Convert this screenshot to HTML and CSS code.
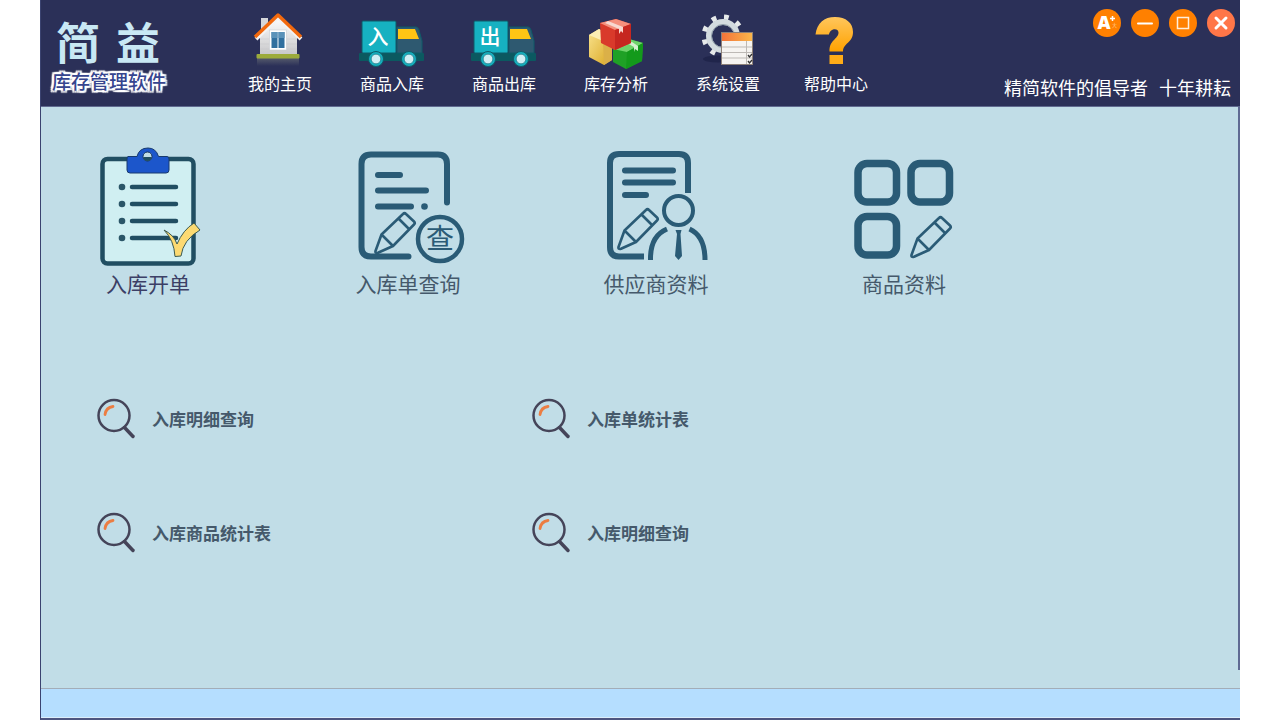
FILE: index.html
```html
<!DOCTYPE html>
<html lang="zh-CN">
<head>
    <meta charset="UTF-8">
    <title>简益库存管理软件</title>
    <link rel="stylesheet" href="styles.css">
</head>
<body>
    <!-- 公用图形 -->
    <svg class="defs" width="0" height="0" aria-hidden="true">
        <defs>
            <linearGradient id="gold" x1="0" y1="0" x2="0" y2="1">
                <stop offset="0" stop-color="#ffc65c"/>
                <stop offset="1" stop-color="#ffa200"/>
            </linearGradient>
            <linearGradient id="wall" x1="0" y1="0" x2="0" y2="1">
                <stop offset="0" stop-color="#ffffff"/>
                <stop offset="1" stop-color="#c9c9cb"/>
            </linearGradient>
            <linearGradient id="shade" x1="0" y1="0" x2="0" y2="1">
                <stop offset="0" stop-color="#555a6c"/>
                <stop offset="1" stop-color="#2b3058"/>
            </linearGradient>
            <linearGradient id="yellow" x1="0" y1="0" x2="1" y2="1">
                <stop offset="0" stop-color="#f9e38e"/>
                <stop offset="1" stop-color="#d9a520"/>
            </linearGradient>
            <linearGradient id="head" x1="0" y1="0" x2="1" y2="0">
                <stop offset="0" stop-color="#f2733a"/>
                <stop offset="1" stop-color="#fbb64a"/>
            </linearGradient>
        </defs>
        <symbol id="truck" viewBox="0 0 72 56">
            <rect x="3" y="41" width="65" height="8" rx="1" fill="#0b5960"/>
            <rect x="6" y="9" width="34" height="32" rx="1" fill="#16b1c1" stroke="#0f5b68"/>
            <path d="M41 41V15H60Q62 15 63 18L66 29V41Z" fill="#2e5970" stroke="#0f5b68"/>
            <path d="M42 17H59L63 27H42Z" fill="#fec514"/>
            <circle cx="20" cy="47" r="7.5" fill="#17aebd" stroke="#0f5b68"/>
            <circle cx="20" cy="47" r="4.8" fill="#d2eff5" stroke="#0f6b78" stroke-width="0.6"/>
            <circle cx="53" cy="47" r="7.5" fill="#17aebd" stroke="#0f5b68"/>
            <circle cx="53" cy="47" r="4.8" fill="#d2eff5" stroke="#0f6b78" stroke-width="0.6"/>
        </symbol>
        <symbol id="pencil" viewBox="0 0 44 44">
            <path d="M2.5 40L8.5 23.5L30 3Q31.5 1.5 33 3L41 10.5Q42.5 12 41 13.5L20 35L5 41.8Q2 42.5 2.5 40Z M8.5 23.5L20 35 M25.5 7.5L36 18" fill="none" stroke="#2a5b76" stroke-width="2.6" stroke-linejoin="round"/>
        </symbol>
        <symbol id="search" viewBox="0 0 40 42">
            <circle cx="18" cy="17.5" r="15.5" fill="none" stroke="#454459" stroke-width="2.5"/>
            <path d="M28.5 29.5L37 38.5" stroke="#454459" stroke-width="3.5" stroke-linecap="round"/>
            <path d="M9 16.5Q10 9.5 17 8.5" fill="none" stroke="#ec7d42" stroke-width="2.8" stroke-linecap="round"/>
        </symbol>
    </svg>

    <div class="window">
        <header class="header">
            <div class="logo">
                <div class="logo-name"><span>简</span><span>益</span></div>
                <div class="logo-sub">库存管理软件</div>
            </div>

            <nav class="nav">
                <a class="nav-item" href="#home">
                    <svg class="nav-icon" viewBox="0 0 72 56">
                        <path d="M17 6H24V20H17Z" fill="#d5d6da"/>
                        <path d="M16 21L34 4L53 21V42H16Z" fill="url(#wall)"/>
                        <path d="M16 32H53M16 37H53M16 27H53" stroke="#c4c4c8" stroke-width="0.5"/>
                        <path d="M12 27L34 5L57 27" fill="none" stroke="#f3f3f3" stroke-width="4"/>
                        <path d="M11 25L34 3L57 25" fill="none" stroke="#f2690d" stroke-width="3.5" stroke-linejoin="round"/>
                        <rect x="25.5" y="18" width="17" height="20" fill="#fff" stroke="#c9ccd0" stroke-width="0.6"/>
                        <path d="M27.5 20H33.5V36H27.5ZM34.5 20H40.5V36H34.5Z" fill="#31709f"/>
                        <path d="M27.5 20H33.5V26H27.5ZM34.5 20H40.5V26H34.5Z" fill="#5a92b9"/>
                        <rect x="13" y="46" width="42" height="8" fill="url(#shade)"/>
                        <rect x="12.5" y="42" width="43" height="4.5" rx="1" fill="#9cab3b"/>
                    </svg>
                    <span>我的主页</span>
                </a>
                <a class="nav-item" href="#in">
                    <svg class="nav-icon" viewBox="0 0 72 56">
                        <use href="#truck" width="72" height="56"/>
                        <text class="truck-text" x="22" y="32">入</text>
                    </svg>
                    <span>商品入库</span>
                </a>
                <a class="nav-item" href="#out">
                    <svg class="nav-icon" viewBox="0 0 72 56">
                        <use href="#truck" width="72" height="56"/>
                        <text class="truck-text" x="22" y="32">出</text>
                    </svg>
                    <span>商品出库</span>
                </a>
                <a class="nav-item" href="#stat">
                    <svg class="nav-icon" viewBox="0 0 72 56">
                        <path d="M9 23L19 17L32 24V48L24 53L9 45Z" fill="url(#yellow)"/>
                        <path d="M9 23L19 17L32 24L23 29Z" fill="#fbeeb4"/>
                        <path d="M23 29L32 24V48L24 53Z" fill="#dbb048"/>
                        <path d="M33 37L49 27L63 31L62 49L46 57L33 50Z" fill="#1fa126"/>
                        <path d="M33 37L49 27L63 31L47 40Z" fill="#6fd36a"/>
                        <path d="M47 40L63 31L62 49L46 57Z" fill="#139a1b"/>
                        <path d="M52 30L58 34V39L55 37L54 40V35L47 31Z" fill="#d5f0d0"/>
                        <path d="M20 11L36 7L51 12V31L35 38L21 31Z" fill="#d93a2b"/>
                        <path d="M20 11L36 7L51 12L35 18Z" fill="#f5907d"/>
                        <path d="M35 18L51 12V31L35 38Z" fill="#c62720"/>
                        <path d="M28 9L43 15V21L41 19L39 22V17L25 11Z" fill="#f8d8d0"/>
                    </svg>
                    <span>库存分析</span>
                </a>
                <a class="nav-item" href="#setting">
                    <svg class="nav-icon" viewBox="0 0 72 56">
                        <ellipse cx="26" cy="47" rx="15" ry="3.5" fill="#20254b"/>
                        <circle cx="31" cy="24" r="19" fill="none" stroke="#e6e9ea" stroke-width="5" stroke-dasharray="4.8 8.463" transform="rotate(-87 31 24)"/>
                        <circle cx="31" cy="24" r="14" fill="none" stroke="#d3dbdf" stroke-width="6"/>
                        <circle cx="31" cy="24" r="11.5" fill="none" stroke="#8d9ba6"/>
                        <rect x="29.5" y="20.5" width="31" height="32" fill="#f6f4f1" stroke="#8c8078"/>
                        <rect x="30" y="21" width="30" height="8" fill="url(#head)"/>
                        <path d="M30 35H60M30 40.5H60M30 46H60M54.5 29V52" stroke="#bdb9b5"/>
                        <path d="M56 43L57.5 45L60 42M56 49L57.5 51L60 48" fill="none" stroke="#333" stroke-width="1.3"/>
                    </svg>
                    <span>系统设置</span>
                </a>
                <a class="nav-item" href="#help">
                    <svg class="nav-icon" viewBox="0 0 72 56">
                        <path d="M15.5 22.5C17 11 24 5 35 5C46 5 53 11 53 20C53 31 43 31 43 39.5H29.5C29 28 38.5 27 38.5 20.5C38.5 15.5 30 16 29 22.5Z" fill="url(#gold)"/>
                        <rect x="29.5" y="43" width="13.5" height="9" fill="#ffac17"/>
                    </svg>
                    <span>帮助中心</span>
                </a>
            </nav>

            <div class="header-right">
                <div class="controls">
                    <button class="ctrl" aria-label="字体放大">
                        <svg viewBox="0 0 28 28">
                            <text class="ctrl-a" x="11" y="20">A</text>
                            <path d="M17 9.5H22M19.5 7V12" stroke="#fff" stroke-width="1.5"/>
                            <text class="ctrl-small" x="21" y="18">大</text>
                        </svg>
                    </button>
                    <button class="ctrl" aria-label="最小化">
                        <svg viewBox="0 0 28 28"><path d="M7 14.5H21" stroke="#fff" stroke-width="2" stroke-linecap="round"/></svg>
                    </button>
                    <button class="ctrl" aria-label="最大化">
                        <svg viewBox="0 0 28 28"><rect x="8.5" y="8.5" width="11" height="11" fill="none" stroke="#ffeeda" stroke-width="1.5"/></svg>
                    </button>
                    <button class="ctrl ctrl-close" aria-label="关闭">
                        <svg viewBox="0 0 28 28"><path d="M9 9L19 19M19 9L9 19" stroke="#fff" stroke-width="3" stroke-linecap="round"/></svg>
                    </button>
                </div>
                <div class="slogan"><span>精简软件的倡导者</span><span>十年耕耘</span></div>
            </div>
        </header>

        <main class="content">
            <div class="cards">
                <a class="card card-first" href="#order">
                    <svg class="card-icon" viewBox="0 0 108 120">
                        <rect x="8.5" y="11" width="91" height="104.5" rx="5" fill="#d0eff2" stroke="#214e62" stroke-width="4.5"/>
                        <path d="M34 8.5H43Q45 0 54 0Q62 0 64.5 8.5H73Q75 8.5 75 11V22Q75 25 72 25H36Q33 25 33 22V11Q33 8.5 34 8.5Z" fill="#1c56cb" stroke="#183a6e"/>
                        <circle cx="53.5" cy="8.5" r="4.5" fill="#c2dde6" stroke="#17345c"/>
                        <path d="M49.5 9A4 4 0 0 0 57.5 9Z" fill="#214e62"/>
                        <path d="M38 39H82M38 56H82M38 73H82M38 90H82" stroke="#214e62" stroke-width="4.5" stroke-linecap="round"/>
                        <g fill="#2b5668">
                            <circle cx="28" cy="39" r="3.3"/>
                            <circle cx="28" cy="56" r="3.3"/>
                            <circle cx="28" cy="73" r="3.3"/>
                            <circle cx="28" cy="90" r="3.3"/>
                        </g>
                        <path d="M70 82Q80 87 83 96Q89 82 100 75L106 82Q89 92 87 108L81 108.5Q80 92 70 82Z" fill="#fcda72" stroke="#3b5a50"/>
                    </svg>
                    <span>入库开单</span>
                </a>
                <a class="card" href="#order-query">
                    <svg class="card-icon" viewBox="0 0 108 120">
                        <path d="M93 54.500V16Q93 6.5 84 6.5H17Q7.500 6.5 7.500 16V99Q7.500 108.5 17 108.5H54.500" fill="none" stroke="#2a5b76" stroke-width="6" stroke-linecap="round"/>
                        <path d="M24 27H46M24 42.5H72M24 58.5H57" stroke="#2a5b76" stroke-width="6" stroke-linecap="round"/>
                        <circle cx="70.5" cy="58.5" r="3.3" fill="#2a5b76"/>
                        <use href="#pencil" x="19" y="63" width="44" height="44"/>
                        <circle cx="86" cy="91" r="22" fill="none" stroke="#2a5b76" stroke-width="4.5"/>
                        <text class="card-text" x="86" y="101">查</text>
                    </svg>
                    <span>入库单查询</span>
                </a>
                <a class="card" href="#supplier">
                    <svg class="card-icon" viewBox="0 0 108 120">
                        <path d="M86 45V15Q86 6 77 6H17Q8 6 8 15V99Q8 108.5 17 108.5H42" fill="none" stroke="#2a5b76" stroke-width="6"/>
                        <path d="M23 22.5H71M23 34.5H71M23 47H44" stroke="#2a5b76" stroke-width="6" stroke-linecap="round"/>
                        <use href="#pencil" x="14" y="59" width="44" height="44"/>
                        <circle cx="76.5" cy="62.5" r="14.5" fill="none" stroke="#2a5b76" stroke-width="4"/>
                        <path d="M48.5 112Q48 88 65 81M103 112Q103 88 87.5 81" fill="none" stroke="#2a5b76" stroke-width="5"/>
                        <path d="M73.5 82H79.5L78.5 86L80 108L76.5 112L73 108L75 86Z" fill="#2a5b76"/>
                    </svg>
                    <span>供应商资料</span>
                </a>
                <a class="card" href="#goods">
                    <svg class="card-icon" viewBox="0 0 108 120">
                        <g fill="none" stroke="#2a5b76" stroke-width="7.5">
                            <rect x="8" y="15.5" width="38.5" height="38.5" rx="9"/>
                            <rect x="61" y="15.5" width="38.5" height="38.5" rx="9"/>
                            <rect x="8" y="68.5" width="38.5" height="38.5" rx="9"/>
                        </g>
                        <use href="#pencil" x="59" y="67" width="44" height="44"/>
                    </svg>
                    <span>商品资料</span>
                </a>
            </div>

            <div class="links">
                <a class="link" href="#detail">
                    <svg class="link-icon"><use href="#search"/></svg>
                    <span>入库明细查询</span>
                </a>
                <a class="link" href="#order-stat">
                    <svg class="link-icon"><use href="#search"/></svg>
                    <span>入库单统计表</span>
                </a>
                <a class="link" href="#goods-stat">
                    <svg class="link-icon"><use href="#search"/></svg>
                    <span>入库商品统计表</span>
                </a>
                <a class="link" href="#detail2">
                    <svg class="link-icon"><use href="#search"/></svg>
                    <span>入库明细查询</span>
                </a>
            </div>
        </main>

        <footer class="statusbar"></footer>
    </div>
</body>
</html>
```
FILE: styles.css
```css
* {
    box-sizing: border-box;
}

body {
    margin: 0;
    background: #fff;
    font-family: "Noto Sans CJK SC", sans-serif;
}

a {
    color: inherit;
    text-decoration: none;
}

.defs {
    position: absolute;
}

.window {
    display: flex;
    flex-direction: column;
    min-height: 100vh;
    margin: 0 40px;
    background: #c1dde7;
    border-left: 1px solid #3b4370;
    border-bottom: 2px solid #4d5580;
}

/* 顶部 */
.header {
    display: flex;
    padding: 0 5px 0 11px;
    background: #2b3058;
    border-bottom: 1px solid #606a90;
    color: #fff;
}

.logo {
    width: 172px;
    padding-top: 18px;
    flex-shrink: 0;
}

.logo-name {
    display: flex;
    gap: 16px;
    padding-left: 4px;
    font-size: 44px;
    font-weight: bold;
    line-height: 46px;
    color: #c8e8f4;
}

.logo-sub {
    font-size: 19px;
    font-weight: 500;
    line-height: 34px;
    color: #36458f;
    text-shadow: 2px 0 1px #fff, -2px 0 1px #fff, 0 2px 1px #fff, 0 -2px 1px #fff,
        2px 2px 1px #fff, -2px 2px 1px #fff, 2px -2px 1px #fff, -2px -2px 1px #fff;
}

.nav {
    display: flex;
    padding: 12px 0 7px;
}

.nav-item {
    display: flex;
    flex-direction: column;
    align-items: center;
    width: 112px;
    font-size: 16px;
    line-height: 31px;
    white-space: nowrap;
}

.nav-item:last-child {
    width: 104px;
}

.nav-icon {
    width: 72px;
    height: 56px;
    overflow: visible;
}

.truck-text {
    font-size: 21px;
    font-weight: 500;
    fill: #fff;
    text-anchor: middle;
}

.header-right {
    display: flex;
    flex-direction: column;
    align-items: flex-end;
    justify-content: space-between;
    margin-left: auto;
    padding: 9px 0 5px;
}

.controls {
    display: flex;
    gap: 10px;
}

.ctrl {
    width: 28px;
    height: 28px;
    padding: 0;
    border: none;
    border-radius: 50%;
    background: #ff8000;
    cursor: pointer;
}

.ctrl svg {
    display: block;
    width: 28px;
    height: 28px;
}

.ctrl-close {
    background: #ff7648;
}

.ctrl-a {
    font-family: "Open Sans", sans-serif;
    font-size: 18px;
    font-weight: 800;
    fill: #fff;
    text-anchor: middle;
}

.ctrl-small {
    font-size: 5px;
    fill: #ffd0a0;
    text-anchor: middle;
}

.slogan {
    display: flex;
    gap: 11px;
    padding-right: 4px;
    font-size: 18px;
    line-height: 28px;
    white-space: nowrap;
}

/* 内容 */
.content {
    flex: 1;
    padding: 41px 53px 0;
    border-right: 2px solid #5f6a93;
}

.cards {
    display: grid;
    grid-template-columns: 260px 248px 248px 248px;
    color: #45596b;
}

.card {
    display: flex;
    flex-direction: column;
    align-items: center;
    width: 108px;
    font-size: 21px;
    line-height: 30px;
    white-space: nowrap;
}

.card-first {
    color: #3c3f66;
}

.card-icon {
    width: 108px;
    height: 120px;
    overflow: visible;
}

.card-text {
    font-size: 28px;
    fill: #2a5b76;
    text-anchor: middle;
}

.links {
    display: grid;
    grid-template-columns: 435px 435px;
    row-gap: 72px;
    padding: 100px 2px 0;
}

.link {
    display: flex;
    align-items: center;
    gap: 16px;
    font-size: 17px;
    font-weight: bold;
    line-height: 24px;
    color: #45596b;
}

.link-icon {
    width: 40px;
    height: 42px;
}

/* 状态栏 */
.statusbar {
    height: 30px;
    margin-top: 18px;
    background: #b5deff;
    border-top: 1px solid #a3adb8;
    border-bottom: 1px solid #dbeefc;
}
```
